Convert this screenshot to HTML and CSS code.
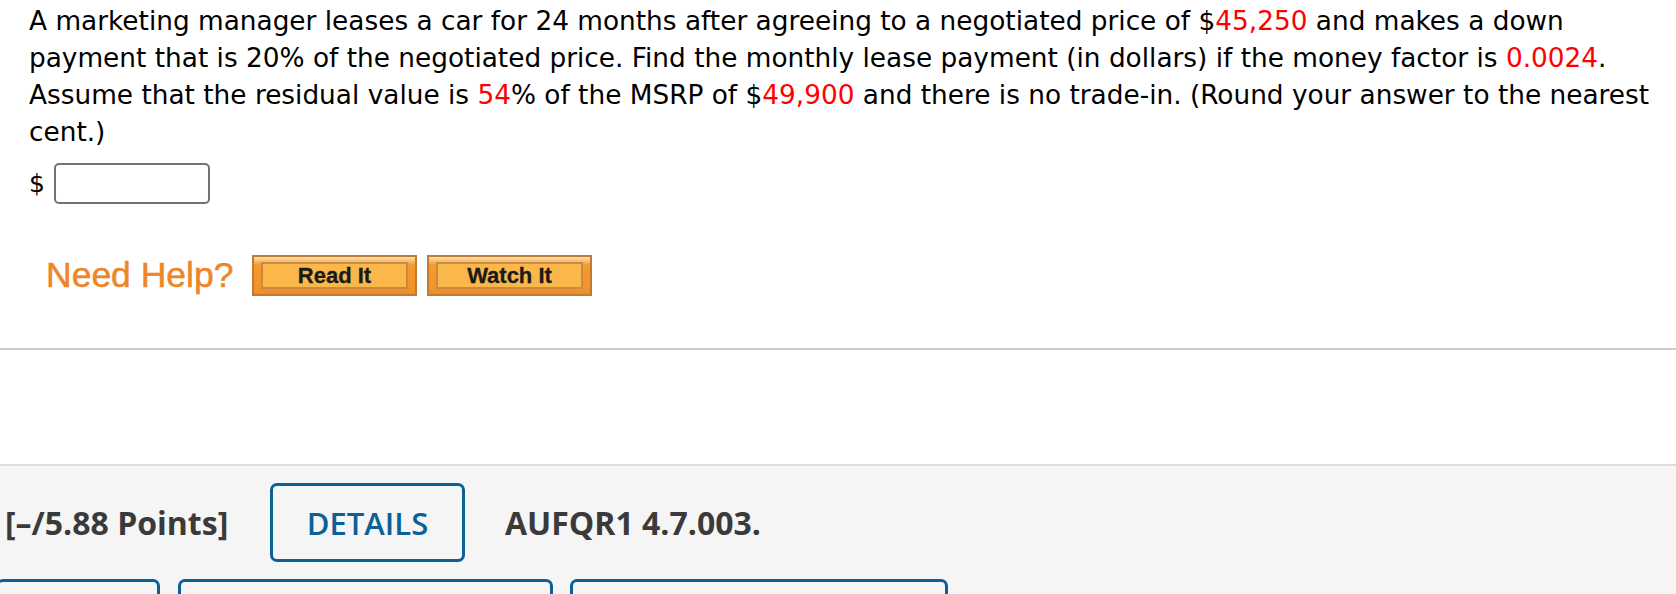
FILE: index.html
```html
<!DOCTYPE html>
<html>
<head>
<meta charset="utf-8">
<link rel="stylesheet" href="styles.css">
</head>
<body>
<div class="question">
  <p class="stem">A marketing manager leases a car for 24 months after agreeing to a negotiated price of $<span class="red">45,250</span> and makes a down payment that is 20% of the negotiated price. Find the monthly lease payment (in dollars) if the money factor is <span class="red">0.0024</span>. Assume that the residual value is <span class="red">54</span>% of the MSRP of $<span class="red">49,900</span> and there is no trade-in. (Round your answer to the nearest cent.)</p>
  <div class="answer"><span class="dollar">$</span><input class="ans" type="text"></div>
  <div class="help">
    <span class="need">Need Help?</span>
    <button class="hbtn"><span class="hin">Read It</span></button>
    <button class="hbtn"><span class="hin">Watch It</span></button>
  </div>
</div>
<div class="sep"></div>
<section class="next">
  <div class="head">
    <span class="pts">[–/5.88 Points]</span>
    <button class="details">DETAILS</button>
    <span class="qid">AUFQR1 4.7.003.</span>
  </div>
  <div class="tabs">
    <div class="tab t1"></div>
    <div class="tab t2"></div>
    <div class="tab t3"></div>
  </div>
</section>
</body>
</html>
```
FILE: styles.css
```css
html, body {
  margin: 0;
  padding: 0;
  background: #fff;
  overflow: hidden;
}
body {
  width: 1676px;
  height: 594px;
}
.question {
  padding: 0 12px 0 29px;
  height: 348px;
}
.stem {
  margin: 0;
  padding-top: 3px;
  font-family: "DejaVu Sans", Verdana, sans-serif;
  font-size: 26.35px;
  line-height: 37px;
  color: #000;
}
.red { color: #ff0000; }
.answer {
  display: flex;
  align-items: center;
  margin-top: 12px;
  height: 41px;
}
.dollar {
  font-family: "DejaVu Sans", Verdana, sans-serif;
  font-size: 25px;
  width: 25px;
}
.ans {
  box-sizing: border-box;
  width: 156px;
  height: 41px;
  border: 2px solid #727272;
  border-radius: 5px;
  margin: 0;
  padding: 0;
  background: #fff;
}
.help {
  display: flex;
  align-items: center;
  margin-top: 51px;
  padding-left: 17px;
  gap: 10px;
}
.need {
  font-family: "Liberation Sans", Arial, sans-serif;
  font-size: 35.5px;
  color: #ee8526;
  width: 196px;
  -webkit-text-stroke: 0.5px #ee8526;
}
.hbtn {
  box-sizing: border-box;
  width: 165px;
  height: 41px;
  padding: 5px 7px;
  margin: 0;
  border: 2px solid #bf7a36;
  background: linear-gradient(#fde1b0 0%, #f59a2c 22%, #f39428 80%, #ee8e28 100%);
  display: flex;
}
.hin {
  flex: 1;
  display: flex;
  align-items: center;
  justify-content: center;
  border: 2px solid #c98a45;
  background: #fab84a;
  font-family: "Liberation Sans", Arial, sans-serif;
  font-weight: bold;
  font-size: 22px;
  color: #1a1a1a;
  -webkit-text-stroke: 0.3px #1a1a1a;
}
.sep {
  height: 2px;
  background: #cccccc;
}
.next {
  margin-top: 114px;
  border-top: 2px solid #dddddd;
  background: #f5f5f5;
  height: 128px;
  overflow: hidden;
}
.head {
  display: flex;
  align-items: center;
  padding-top: 17px;
  padding-left: 5px;
  font-family: "Open Sans", sans-serif;
}
.pts {
  font-weight: bold;
  font-size: 32px;
  color: #3a3a3a;
  width: 265px;
}
.details {
  box-sizing: border-box;
  width: 195px;
  height: 79px;
  border: 3px solid #0b6098;
  border-radius: 7px;
  background: transparent;
  font-family: "Open Sans", sans-serif;
  font-weight: 600;
  font-size: 31px;
  color: #0b6098;
  margin: 0;
  padding: 0;
}
.qid {
  margin-left: 40px;
  font-weight: bold;
  font-size: 32px;
  color: #3a3a3a;
}
.tabs {
  display: flex;
  margin-top: 17px;
}
.tab {
  box-sizing: border-box;
  height: 40px;
  flex: none;
  border: 3px solid #0b6098;
  border-radius: 7px;
}
.t1 { width: 164px; margin-left: -4px; }
.t2 { width: 375px; margin-left: 18px; }
.t3 { width: 378px; margin-left: 17px; }
```
